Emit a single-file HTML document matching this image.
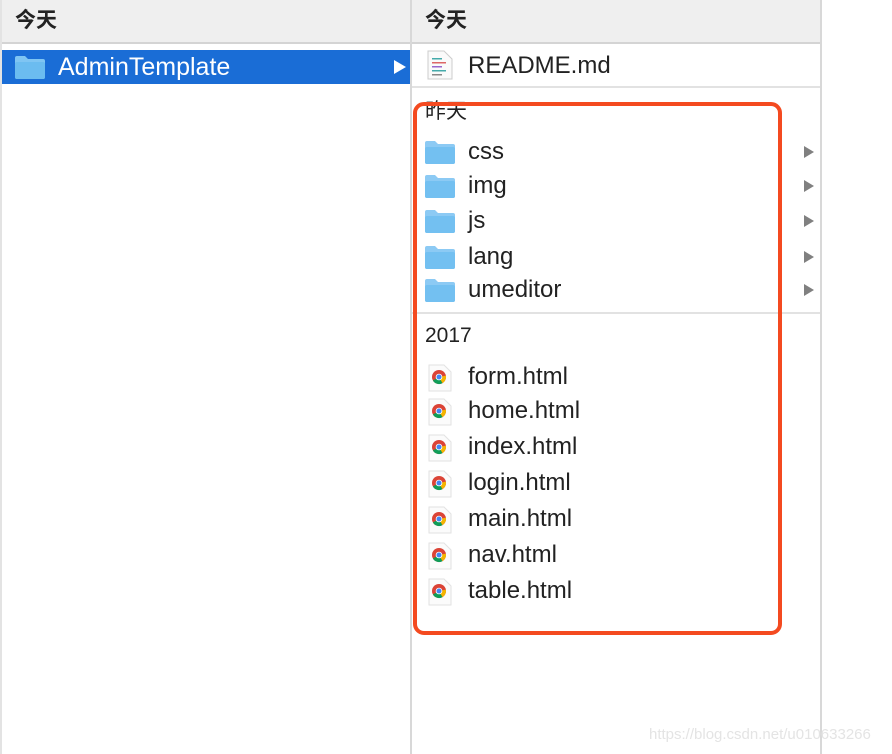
<!DOCTYPE html>
<html><head><meta charset="utf-8"><style>
*{margin:0;padding:0;box-sizing:border-box}
body{width:892px;height:754px;background:#fff;position:relative;overflow:hidden;font-family:"Liberation Sans","Noto Sans CJK SC",sans-serif;color:#222}
.a{position:absolute}
.t{position:absolute;font-size:24px;line-height:26px;white-space:nowrap}
.h{position:absolute;font-size:21px;line-height:24px}
</style></head><body>
<div class="a" style="left:0;top:0;width:822px;height:42px;background:#efefef"></div>
<div class="a" style="left:0;top:42px;width:822px;height:2px;background:#d4d4d4"></div>
<div class="a" style="left:0;top:0;width:2px;height:754px;background:#e3e3e3"></div>
<div class="a" style="left:410px;top:0;width:2px;height:754px;background:#d8d8d8"></div>
<div class="a" style="left:820px;top:0;width:2px;height:754px;background:#d8d8d8"></div>
<div class="h" style="left:15px;top:9px;font-weight:bold">今天</div>
<div class="h" style="left:425px;top:9px;font-weight:bold">今天</div>
<div class="a" style="left:2px;top:50px;width:408px;height:34px;background:#1a6dd6"></div>
<svg class="a" style="left:14px;top:55px" width="32" height="25"><path d="M1 3 Q1 1 3 1 H11 L14 4 H29 Q31 4 31 6 V22 Q31 24 29 24 H3 Q1 24 1 22Z" fill="#7fc5f3"/><rect x="1" y="7" width="30" height="17" rx="2" fill="#6bbcf0"/></svg>
<div class="t" style="left:58px;top:54px;color:#fff;font-size:25px">AdminTemplate</div>
<svg class="a" style="left:393px;top:59px" width="14" height="16"><path d="M1 1 L13 8 L1 15Z" fill="#fff"/></svg>
<svg class="a" style="left:427px;top:50px" width="26" height="30"><path d="M1 1H17L25 9V29H1Z" fill="#fafafa" stroke="#ccc"/><rect x="5" y="8" width="10" height="1.5" fill="#4aa"/><rect x="5" y="12" width="14" height="1.5" fill="#d66"/><rect x="5" y="16" width="10" height="1.5" fill="#96c"/><rect x="5" y="20" width="14" height="1.5" fill="#4aa"/><rect x="5" y="24" width="10" height="1.5" fill="#888"/></svg>
<div class="t" style="left:468px;top:53px">README.md</div>
<div class="a" style="left:412px;top:86px;width:408px;height:2px;background:#e2e2e2"></div>
<div class="h" style="left:425px;top:100px">昨天</div>
<div class="a" style="left:412px;top:312px;width:408px;height:2px;background:#e2e2e2"></div>
<div class="h" style="left:425px;top:324px">2017</div>
<div id="f"></div>
<div class="a" style="left:413px;top:102px;width:369px;height:533px;border:4px solid #f44a20;border-radius:11px"></div>
<div class="a" style="left:649px;top:726px;font-size:15px;color:#e4e4e4">https://blog.csdn.net/u010633266</div>
<script>
var folders=[["css",152],["img",186],["js",221],["lang",257],["umeditor",290]];
var files=[["form.html",377],["home.html",411],["index.html",447],["login.html",483],["main.html",519],["nav.html",555],["table.html",591]];
var h="";
folders.forEach(function(f){var y=f[1];
h+='<svg class="a" style="left:424px;top:'+(y-12)+'px" width="32" height="25"><path d="M1 3 Q1 1 3 1 H11 L14 4 H29 Q31 4 31 6 V22 Q31 24 29 24 H3 Q1 24 1 22Z" fill="#8ccaf4"/><rect x="1" y="7" width="30" height="17" rx="2" fill="#73c0f1"/></svg>';
h+='<div class="t" style="left:468px;top:'+(y-13)+'px">'+f[0]+'</div>';
h+='<svg class="a" style="left:803px;top:'+(y-7)+'px" width="12" height="14"><path d="M1 1L11 7L1 13Z" fill="#808080"/></svg>';});
files.forEach(function(f){var y=f[1];
h+='<svg class="a" style="left:428px;top:'+(y-13)+'px" width="24" height="28"><path d="M1 1H16L23 8V27H1Z" fill="#fbfbfb" stroke="#e2e2e2"/><circle cx="11" cy="13" r="7" fill="#db4437"/><path d="M11 13 L4.9 16.5 A7 7 0 0 0 14.5 19.1Z" fill="#0f9d58"/><path d="M11 13 L14.5 19.1 A7 7 0 0 0 17.9 11.6 Z" fill="#f4b400"/><circle cx="11" cy="13" r="3.3" fill="#fff"/><circle cx="11" cy="13" r="2.5" fill="#4285f4"/></svg>';
h+='<div class="t" style="left:468px;top:'+(y-13)+'px">'+f[0]+'</div>';});
document.getElementById("f").innerHTML=h;
</script>
</body></html>
